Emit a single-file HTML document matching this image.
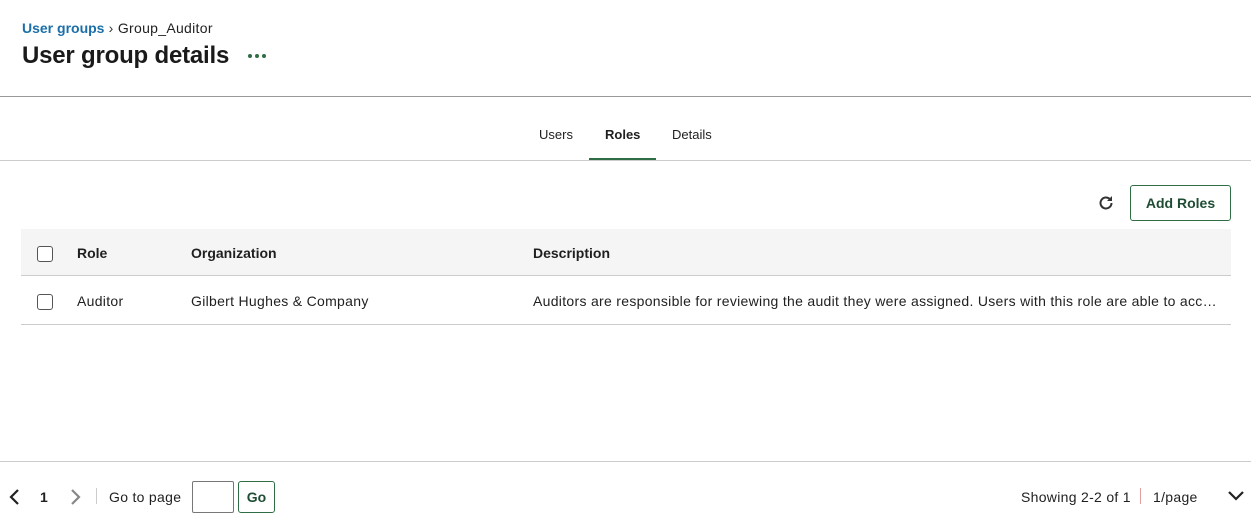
<!DOCTYPE html>
<html><head><style>
*{margin:0;padding:0;box-sizing:border-box}
body{width:1251px;height:524px;background:#fff;font-family:"Liberation Sans",sans-serif;color:#1f1f1f;position:relative;overflow:hidden}
.a{position:absolute;white-space:nowrap}
.t{letter-spacing:0.3px}
.cb{position:absolute;width:16px;height:16px;border:1.5px solid #555;border-radius:3px;background:#fff}
</style></head><body>
<div class="a t" style="left:22px;top:20px;font-size:14px"><span style="color:#1b6fa8;font-weight:bold;letter-spacing:0">User groups</span> <span style="color:#333">›</span> Group_Auditor</div>
<div class="a" style="left:22px;top:42px;font-size:24px;font-weight:bold;color:#1a1a1a;letter-spacing:-0.2px">User group details</div>
<svg class="a" style="left:247px;top:53px" width="20" height="6"><circle cx="3" cy="3" r="2" fill="#2f6e44"/><circle cx="10" cy="3" r="2" fill="#2f6e44"/><circle cx="17" cy="3" r="2" fill="#2f6e44"/></svg>
<div class="a" style="left:0;top:96px;width:1251px;height:1px;background:#999"></div>
<div class="a" style="left:539px;top:127px;font-size:13px">Users</div>
<div class="a" style="left:605px;top:127px;font-size:13px;font-weight:bold">Roles</div>
<div class="a" style="left:672px;top:127px;font-size:13px">Details</div>
<div class="a" style="left:0;top:160px;width:1251px;height:1px;background:#ccc"></div>
<div class="a" style="left:589px;top:158px;width:67px;height:2px;background:#2f6e44"></div>
<svg class="a" style="left:1097px;top:194px" width="18" height="18" viewBox="0 0 18 18"><path d="M14.5 9a5.5 5.5 0 1 1-1.6-3.9" fill="none" stroke="#333" stroke-width="2"/><path d="M15 2v5h-5z" fill="#333"/></svg>
<div class="a" style="left:1130px;top:185px;width:101px;height:36px;border:1px solid #2f6e44;border-radius:3px;font-size:14px;font-weight:bold;color:#1f4d33;text-align:center;line-height:34px">Add Roles</div>
<div class="a" style="left:21px;top:229px;width:1210px;height:47px;background:#f5f5f5;border-bottom:1px solid #ccc"></div>
<div class="cb" style="left:37px;top:246px"></div>
<div class="a" style="left:77px;top:245px;font-size:14px;font-weight:bold">Role</div>
<div class="a" style="left:191px;top:245px;font-size:14px;font-weight:bold">Organization</div>
<div class="a" style="left:533px;top:245px;font-size:14px;font-weight:bold">Description</div>
<div class="a" style="left:21px;top:324px;width:1210px;height:1px;background:#ccc"></div>
<div class="cb" style="left:37px;top:294px"></div>
<div class="a t" style="left:77px;top:293px;font-size:14px">Auditor</div>
<div class="a t" style="left:191px;top:293px;font-size:14px">Gilbert Hughes &amp; Company</div>
<div class="a t" style="left:533px;top:293px;font-size:14px;width:690px;overflow:hidden;text-overflow:ellipsis">Auditors are responsible for reviewing the audit they were assigned. Users with this role are able to access the audit</div>
<div class="a" style="left:0;top:461px;width:1251px;height:1px;background:#ccc"></div>
<svg class="a" style="left:7px;top:488px" width="14" height="18"><path d="M11 2L4 9l7 7" fill="none" stroke="#222" stroke-width="2.2"/></svg>
<div class="a" style="left:40px;top:489px;font-size:14px;font-weight:bold">1</div>
<svg class="a" style="left:69px;top:488px" width="14" height="18"><path d="M3 2l7 7-7 7" fill="none" stroke="#888" stroke-width="2.2"/></svg>
<div class="a" style="left:96px;top:488px;width:1px;height:16px;background:#ccc"></div>
<div class="a t" style="left:109px;top:489px;font-size:14px">Go to page</div>
<div class="a" style="left:192px;top:481px;width:42px;height:32px;border:1px solid #777;border-radius:2px"></div>
<div class="a" style="left:238px;top:481px;width:37px;height:32px;border:1px solid #2f6e44;border-radius:3px;font-size:14px;font-weight:bold;color:#1f4d33;text-align:center;line-height:30px">Go</div>
<div class="a t" style="left:1021px;top:489px;font-size:14px">Showing 2-2 of 1</div>
<div class="a" style="left:1140px;top:488px;width:1px;height:16px;background:#e0a0a0"></div>
<div class="a t" style="left:1153px;top:489px;font-size:14px">1/page</div>
<svg class="a" style="left:1227px;top:490px" width="18" height="12"><path d="M2 2l7 7 7-7" fill="none" stroke="#222" stroke-width="2.2"/></svg>
</body></html>
